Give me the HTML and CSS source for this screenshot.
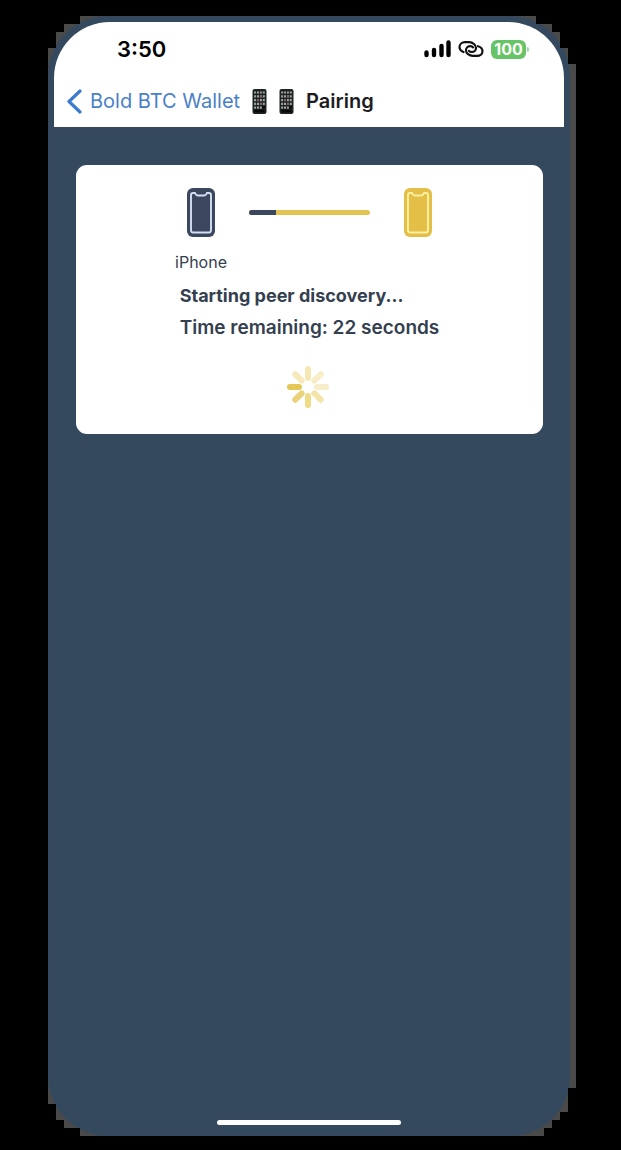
FILE: index.html
```html
<!DOCTYPE html>
<html lang="en">
<head>
<meta charset="utf-8">
<meta name="viewport" content="width=device-width, initial-scale=1">
<title>Pairing</title>
<link rel="stylesheet" href="styles.css">
</head>
<body>
<svg class="defs" aria-hidden="true">
  <symbol id="handset" viewBox="0 0 28 50">
    <rect width="28" height="49" rx="6" fill="currentColor"/>
    <path d="M6 5H8Q9 7.500 11 7.500H17Q19 7.500 20 5H22Q24 5 24 7V42Q24 44.500 22 44.500H6Q4 44.500 4 42V7Q4 5 6 5Z" fill="none" stroke="var(--rim)" stroke-width="1.900"/>
  </symbol>
  <symbol id="mobile" viewBox="0 0 14 25">
    <rect width="14" height="25" rx="2" fill="#1d2222"/>
    <path d="M1.600 3.500H12.400M1.600 7.300H12.400M1.600 11.100H12.400M1.600 14.900H12.400M1.600 18.700H12.400" stroke="#9fa3a0" stroke-width="2.200" stroke-dasharray="2 .9"/>
    <path d="M4.500 11H6.500M7.400 7.300H9.400M7.400 15H9.400" stroke="#875961" stroke-width="2"/>
    <path d="M9.500 18.500H12.500M2 22H12" stroke="#050606" stroke-width="2.600"/>
  </symbol>
</svg>
<div class="backing">
  <main class="phone">
    <header class="top">
      <div class="status">
        <time class="clock">3:50</time>
        <div class="indicators">
          <svg width="27" height="18" viewBox="0 0 27 18" role="img" aria-label="Signal"><path d="M2.500 12.500V15M10 10V15M17.500 6V15M24.500 2.500V15" stroke="#000" stroke-width="4.400" stroke-linecap="round"/></svg>
          <svg width="26" height="18" viewBox="0 0 26 18" fill="none" stroke="#111" stroke-width="2.200" stroke-linecap="round" role="img" aria-label="Linked"><path d="M5.500 12C3 11 1.500 9 1.500 7C1.500 4 4 2.200 7 2.200H11C15 2.200 18 5 18 8C18 10.500 16 12 13.800 12C12.500 12 11.500 11.500 11 10.800"/><path d="M20 6.200C23 7 24.500 9 24.500 11.200C24.500 14 22 15.900 19 15.900H15C11 15.900 8 13.300 8 10.200C8 7.700 10 6.200 12.200 6.200C13.500 6.200 14.500 6.700 15 7.400"/></svg>
          <span class="battery">100</span>
        </div>
      </div>
      <nav class="nav">
        <a class="back" href="#">
          <svg width="15" height="25" viewBox="0 0 15 25" aria-hidden="true"><path d="M13 2L2 12.500L13 23" fill="none" stroke="#3d7bd0" stroke-width="3.200" stroke-linecap="round" stroke-linejoin="round"/></svg>
          Bold BTC Wallet
        </a>
        <h1 class="title">
          <svg class="mobile" aria-hidden="true"><use href="#mobile"/></svg>
          <svg class="mobile" aria-hidden="true"><use href="#mobile"/></svg>
          Pairing
        </h1>
      </nav>
    </header>
    <section class="card">
      <div class="devices">
        <figure class="device">
          <svg class="handset local" aria-hidden="true"><use href="#handset"/></svg>
          <figcaption>iPhone</figcaption>
        </figure>
        <div class="track"><div class="progress"></div></div>
        <figure class="device">
          <svg class="handset peer" aria-hidden="true"><use href="#handset"/></svg>
        </figure>
      </div>
      <div class="message" role="status">
        <p class="stage">Starting peer discovery...</p>
        <p class="remaining">Time remaining: 22 seconds</p>
      </div>
      <svg class="spinner" viewBox="-22 -22 44 44" stroke-width="6" stroke-linecap="round" role="img" aria-label="Searching">
        <path d="M0-9V-18" stroke="#f5e8b5"/>
        <path d="M0-9V-18" transform="rotate(45)" stroke="#f8edc6"/>
        <path d="M0-9V-18" transform="rotate(90)" stroke="#f8edca"/>
        <path d="M0-9V-18" transform="rotate(135)" stroke="#f3e4a8"/>
        <path d="M0-9V-18" transform="rotate(180)" stroke="#efda86"/>
        <path d="M0-9V-18" transform="rotate(225)" stroke="#ead278"/>
        <path d="M0-9V-18" transform="rotate(270)" stroke="#e5c757"/>
        <path d="M0-9V-18" transform="rotate(315)" stroke="#f6e9ba"/>
      </svg>
    </section>
    <div class="home"></div>
  </main>
</div>
</body>
</html>
```
FILE: styles.css
```css
* { box-sizing: border-box; }
body {
  margin: 0;
  min-height: 100vh;
  padding: 16px 45px 14px 48px;
  display: flex;
  background: #000;
  font-family: Inter, "Liberation Sans", sans-serif;
}
.defs { position: absolute; width: 0; height: 0; }
.backing {
  flex: 1;
  display: flex;
  padding-right: 6px;
  background: #4a4a4a;
  clip-path: polygon(
    0 32px, 8px 32px, 8px 16px, 16px 16px, 16px 8px, 32px 8px, 32px 0,
    calc(100% - 40px) 0, calc(100% - 40px) 8px, calc(100% - 24px) 8px,
    calc(100% - 24px) 16px, calc(100% - 16px) 16px, calc(100% - 16px) 32px,
    calc(100% - 8px) 32px, calc(100% - 8px) 48px, 100% 48px,
    100% calc(100% - 48px), calc(100% - 8px) calc(100% - 48px),
    calc(100% - 8px) calc(100% - 24px), calc(100% - 16px) calc(100% - 24px),
    calc(100% - 16px) calc(100% - 16px), calc(100% - 24px) calc(100% - 16px),
    calc(100% - 24px) calc(100% - 8px), calc(100% - 32px) calc(100% - 8px),
    calc(100% - 32px) 100%, 32px 100%, 32px calc(100% - 8px),
    16px calc(100% - 8px), 16px calc(100% - 16px), 8px calc(100% - 16px),
    8px calc(100% - 32px), 0 calc(100% - 32px));
}
.phone {
  flex: 1;
  display: flex;
  flex-direction: column;
  padding: 6px 6px 11px;
  background: #34495e;
  border-radius: 60px;
}
.top {
  padding: 13px 38px 10px 13px;
  background: #fff;
  border-radius: 56px 56px 0 0;
}
.status {
  display: flex;
  align-items: center;
  justify-content: space-between;
  height: 28px;
  padding-left: 50px;
}
.clock { font-size: 22px; font-weight: 600; color: #000; }
.indicators { display: flex; align-items: center; gap: 7px; }
.battery {
  position: relative;
  width: 35px;
  height: 19px;
  border-radius: 6px;
  background: #67c466;
  color: #fff;
  font-size: 16px;
  font-weight: 700;
  line-height: 19px;
  text-align: center;
}
.battery::after {
  content: "";
  position: absolute;
  left: 36px;
  top: 7px;
  width: 2px;
  height: 5px;
  border-radius: 0 2px 2px 0;
  background: #a4d6a4;
}
.nav { display: flex; align-items: center; gap: 12px; height: 32px; margin-top: 22px; }
.back {
  display: flex;
  align-items: center;
  gap: 8px;
  color: #4a7fc9;
  font-size: 20px;
  text-decoration: none;
  white-space: nowrap;
}
.title {
  display: flex;
  align-items: center;
  gap: 12px;
  margin: 0;
  color: #1c1c1e;
  font-size: 20px;
  font-weight: 600;
}
.mobile { width: 15px; height: 25px; }
.card {
  display: flex;
  flex-direction: column;
  align-items: center;
  margin: 38px 21px 0 22px;
  padding: 23px 24px 25px;
  background: #fff;
  border-radius: 11px;
  color: #34404f;
}
.devices { display: flex; align-items: flex-start; gap: 20px; }
.device {
  display: flex;
  flex-direction: column;
  align-items: center;
  width: 56px;
  margin: 0;
}
.device figcaption { margin-top: 14px; font-size: 16px; line-height: 20px; }
.handset { width: 28px; height: 50px; }
.local { color: #3a475e; --rim: #d5dff0; }
.peer { color: #e3bf48; --rim: #fff0a0; }
.track {
  width: 121px;
  height: 5px;
  margin-top: 22px;
  border-radius: 3px;
  background: #e3c352;
  overflow: hidden;
}
.progress { width: 22%; height: 100%; background: #3a475e; }
.message { margin-top: 8px; }
.message p { margin: 0; line-height: 32px; }
.stage { font-size: 18px; font-weight: 700; }
.remaining { font-size: 19px; font-weight: 600; }
.spinner { width: 44px; height: 44px; margin: 21px 3px 0 0; }
.home {
  width: 184px;
  max-width: 60%;
  height: 5px;
  margin: auto auto 0;
  border-radius: 3px;
  background: #fff;
}
```
